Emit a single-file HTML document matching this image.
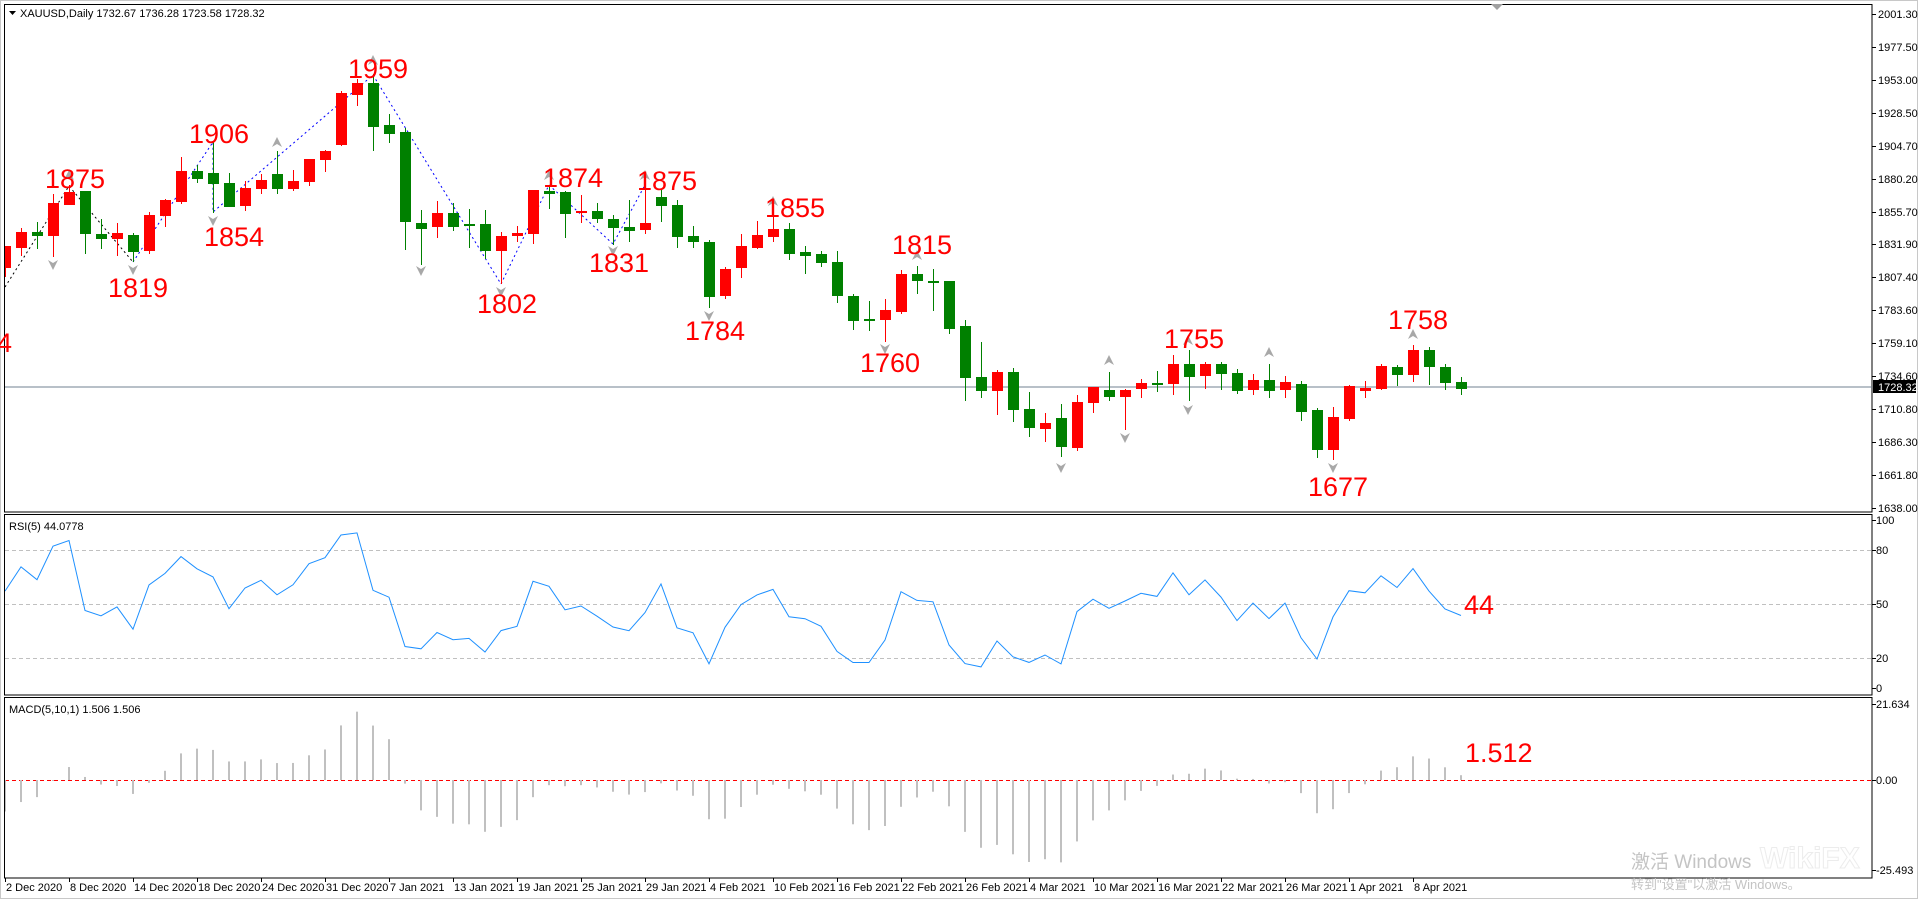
<!DOCTYPE html>
<html><head><meta charset="utf-8">
<style>
html,body{margin:0;padding:0;background:#fff;width:1920px;height:900px;overflow:hidden}
svg{position:absolute;left:0;top:0}
.ax{font-family:"Liberation Sans",sans-serif;font-size:11px;fill:#000}
.lb{font-family:"Liberation Sans",sans-serif;font-size:27px;fill:#ff0000}
</style></head>
<body>
<svg id="s" width="1920" height="900" viewBox="0 0 1920 900" xmlns="http://www.w3.org/2000/svg">
<defs>
<clipPath id="cm"><rect x="5" y="5" width="1867" height="507"/></clipPath>
<clipPath id="cr"><rect x="5" y="515" width="1867" height="180"/></clipPath>
<clipPath id="cd"><rect x="5" y="698" width="1867" height="180"/></clipPath>
</defs>
<!-- outer border -->
<rect x="0.5" y="0.5" width="1917" height="898" fill="none" stroke="#c8c8c8"/>
<!-- frames -->
<rect x="4.5" y="4.5" width="1867.5" height="507.5" fill="none" stroke="#000"/>
<rect x="4.5" y="514.5" width="1867.5" height="180.5" fill="none" stroke="#000"/>
<rect x="4.5" y="697.5" width="1867.5" height="180.5" fill="none" stroke="#000"/>
<!-- top triangle marker -->
<path d="M1491 4 L1503 4 L1497 10 Z" fill="#a0a0a0"/>
<!-- header -->
<path d="M9 11 L16 11 L12.5 15 Z" fill="#000"/>
<text x="20" y="17" class="ax">XAUUSD,Daily  1732.67 1736.28 1723.58 1728.32</text>
<text x="9" y="530" class="ax">RSI(5) 44.0778</text>
<text x="9" y="713" class="ax">MACD(5,10,1) 1.506 1.506</text>

<!-- grid lines -->
<line x1="5" y1="387" x2="1872" y2="387" stroke="#708090" stroke-width="1"/>
<g stroke="#c0c0c0" stroke-dasharray="4,3">
<line x1="5" y1="550.5" x2="1872" y2="550.5"/>
<line x1="5" y1="604.5" x2="1872" y2="604.5"/>
<line x1="5" y1="658.5" x2="1872" y2="658.5"/>
</g>
<line x1="5" y1="780.5" x2="1872" y2="780.5" stroke="#ff0000" stroke-dasharray="4,3"/>

<!-- zigzag -->
<g clip-path="url(#cm)" fill="none" stroke-width="1" stroke-dasharray="2,3">
<polyline points="5,287 69,186 133,262" stroke="#000"/>
<polyline points="133,262 213,142 213,212 373,75 501,284 549,185 613,244 645,185" stroke="#0000ff"/>
</g>

<g id="candles" clip-path="url(#cm)"></g>
<g id="rsi" clip-path="url(#cr)"></g>
<g id="macd" clip-path="url(#cd)"></g>

<!-- fractal arrows -->
<g id="arrows" fill="#a8a8a8"></g>

<!-- labels -->
<g class="lb">
<text x="45" y="188" class="lb">1875</text>
<text x="189" y="143" class="lb">1906</text>
<text x="348" y="78" class="lb">1959</text>
<text x="204" y="246" class="lb">1854</text>
<text x="108" y="297" class="lb">1819</text>
<text x="-3" y="352" class="lb">4</text>
<text x="477" y="313" class="lb">1802</text>
<text x="543" y="187" class="lb">1874</text>
<text x="589" y="272" class="lb">1831</text>
<text x="637" y="190" class="lb">1875</text>
<text x="685" y="340" class="lb">1784</text>
<text x="765" y="217" class="lb">1855</text>
<text x="892" y="254" class="lb">1815</text>
<text x="860" y="372" class="lb">1760</text>
<text x="1164" y="348" class="lb">1755</text>
<text x="1308" y="496" class="lb">1677</text>
<text x="1388" y="329" class="lb">1758</text>
<text x="1464" y="614" class="lb">44</text>
<text x="1465" y="762" class="lb">1.512</text>
</g>

<!-- price axis -->
<g class="ax" id="pax">
<text x="1878" y="18">2001.30</text>
<text x="1878" y="51">1977.50</text>
<text x="1878" y="84">1953.00</text>
<text x="1878" y="117">1928.50</text>
<text x="1878" y="150">1904.70</text>
<text x="1878" y="183">1880.20</text>
<text x="1878" y="216">1855.70</text>
<text x="1878" y="248">1831.90</text>
<text x="1878" y="281">1807.40</text>
<text x="1878" y="314">1783.60</text>
<text x="1878" y="347">1759.10</text>
<text x="1878" y="380">1734.60</text>
<text x="1878" y="413">1710.80</text>
<text x="1878" y="446">1686.30</text>
<text x="1878" y="479">1661.80</text>
<text x="1878" y="512">1638.00</text>
</g>
<rect x="1873" y="380" width="43" height="13" fill="#000"/>
<text x="1878" y="391" class="ax" style="fill:#fff">1728.32</text>
<g class="ax">
<text x="1876" y="524">100</text>
<text x="1876" y="554">80</text>
<text x="1876" y="608">50</text>
<text x="1876" y="662">20</text>
<text x="1876" y="692">0</text>
<text x="1876" y="708">21.634</text>
<text x="1876" y="784">0.00</text>
<text x="1876" y="874">-25.493</text>
</g>
<g id="ticks" stroke="#000"></g>

<!-- date axis -->
<g class="ax">
<text x="6" y="891">2 Dec 2020</text>
<text x="70" y="891">8 Dec 2020</text>
<text x="134" y="891">14 Dec 2020</text>
<text x="198" y="891">18 Dec 2020</text>
<text x="262" y="891">24 Dec 2020</text>
<text x="326" y="891">31 Dec 2020</text>
<text x="390" y="891">7 Jan 2021</text>
<text x="454" y="891">13 Jan 2021</text>
<text x="518" y="891">19 Jan 2021</text>
<text x="582" y="891">25 Jan 2021</text>
<text x="646" y="891">29 Jan 2021</text>
<text x="710" y="891">4 Feb 2021</text>
<text x="774" y="891">10 Feb 2021</text>
<text x="838" y="891">16 Feb 2021</text>
<text x="902" y="891">22 Feb 2021</text>
<text x="966" y="891">26 Feb 2021</text>
<text x="1030" y="891">4 Mar 2021</text>
<text x="1094" y="891">10 Mar 2021</text>
<text x="1158" y="891">16 Mar 2021</text>
<text x="1222" y="891">22 Mar 2021</text>
<text x="1286" y="891">26 Mar 2021</text>
<text x="1350" y="891">1 Apr 2021</text>
<text x="1414" y="891">8 Apr 2021</text>
</g>

<!-- watermark -->
<text x="1631" y="868" style="font-family:'Liberation Sans','Noto Sans CJK SC',sans-serif;font-size:19px;fill:#c4c4c4">激活 Windows</text>
<text x="1631" y="889" style="font-family:'Liberation Sans','Noto Sans CJK SC',sans-serif;font-size:13px;fill:#c4c4c4">转到"设置"以激活 Windows。</text>
<text x="1760" y="868" style="font-family:'Liberation Sans',sans-serif;font-size:30px;font-weight:bold;fill:none;stroke:#ececec;stroke-width:1">WikiFX</text>
</svg>
<script>
(function(){
var NS="http://www.w3.org/2000/svg";
function el(p,t,a){var e=document.createElementNS(NS,t);for(var k in a)e.setAttribute(k,a[k]);p.appendChild(e);return e;}
var D=[
[246,277,246,268,'r'],[228,256,232,248,'r'],[222,249,232,236,'g'],[194,257,203,236,'r'],[185,205,192,205,'r'],
[191,254,191,234,'g'],[219,249,234,239,'g'],[223,256,233,239,'r'],[233,262,235,252,'g'],[212,254,215,251,'r'],
[199,227,200,216,'r'],[157,204,171,202,'r'],[165,183,171,179,'g'],[142,213,173,184,'g'],[173,207,183,207,'g'],
[181,211,188,206,'r'],[174,194,180,189,'r'],[151,194,174,189,'g'],[170,191,181,189,'r'],[159,186,159,182,'r'],
[150,172,151,160,'r'],[91,146,93,145,'r'],[79,106,83,95,'r'],[74,151,83,127,'g'],[114,143,125,134,'g'],
[128,250,132,222,'g'],[210,265,223,229,'g'],[201,238,213,227,'r'],[203,231,213,227,'g'],[209,248,224,226,'g'],
[210,259,224,251,'g'],[232,284,236,251,'r'],[226,242,233,236,'r'],[190,244,190,234,'r'],[185,209,191,194,'g'],
[191,238,192,214,'g'],[195,223,211,213,'r'],[203,223,211,219,'g'],[215,245,219,228,'g'],[200,242,227,231,'g'],
[185,234,223,230,'r'],[190,222,197,206,'g'],[200,248,205,237,'g'],[226,248,236,242,'g'],[240,308,242,297,'g'],
[267,299,269,296,'r'],[234,278,246,268,'r'],[221,249,235,248,'r'],[212,242,229,237,'r'],[223,260,229,254,'g'],
[246,274,252,256,'g'],[251,267,254,263,'g'],[251,303,262,296,'g'],[294,330,296,321,'g'],[301,331,319,321,'g'],
[299,342,310,320,'r'],[270,314,274,312,'r'],[266,294,274,281,'g'],[269,311,281,282,'g'],[281,334,281,329,'g'],
[320,401,326,378,'g'],[342,398,377,391,'g'],[370,415,372,391,'r'],[368,422,372,410,'g'],[392,437,409,428,'g'],
[413,442,423,429,'r'],[404,457,418,447,'g'],[395,451,402,448,'r'],[387,413,387,403,'r'],
[372,401,390,397,'g'],[389,430,390,397,'r'],[379,398,383,389,'r'],[371,392,383,385,'g'],[355,395,364,384,'r'],
[350,401,364,377,'g'],[362,389,364,376,'r'],[362,390,364,374,'g'],[369,394,373,391,'g'],[374,395,380,390,'r'],
[364,398,380,391,'g'],[376,398,382,390,'r'],[381,421,384,412,'g'],[408,458,410,450,'g'],[407,460,417,450,'r'],
[385,421,386,419,'r'],[381,398,388,391,'r'],[364,390,366,389,'r'],[365,386,367,375,'g'],[345,382,350,375,'r'],
[347,385,350,367,'g'],[364,390,367,383,'g'],[377,395,382,389,'g']];
var cg=document.getElementById('candles');
var C=[];
D.forEach(function(d,i){
  var x=5+16*i, col=d[4]=='r'?'#ff0000':'#008000';
  el(cg,'rect',{x:x,y:d[0],width:1,height:Math.max(1,d[1]-d[0]),fill:col});
  var h=Math.max(2,d[3]-d[2]);
  el(cg,'rect',{x:x-5,y:d[2],width:11,height:h,fill:col});
  var cy=d[4]=='r'?d[2]:d[3];
  C.push(2001.3-(cy-14)*0.73543);
});
// RSI(5)
var ag=4,al=3,pts=[];
C.forEach(function(c,i){
  var df=i?c-C[i-1]:0;
  ag=(ag*4+Math.max(df,0))/5; al=(al*4+Math.max(-df,0))/5;
  var r=100*ag/(ag+al);
  pts.push((5+16*i)+','+(694-1.8*r).toFixed(1));
});
el(document.getElementById('rsi'),'polyline',{points:pts.join(' '),fill:'none',stroke:'#1e90ff','stroke-width':1});
// MACD(5,10)
var e5=C[0]+5,e10=C[0]+15,mg=document.getElementById('macd');
C.forEach(function(c,i){
  e5=e5+(c-e5)*2/6; e10=e10+(c-e10)*2/11;
  var m=e5-e10, y=780-m*3.52, x=5+16*i;
  el(mg,'rect',{x:x-1,y:Math.min(y,780),width:2,height:Math.max(1,Math.abs(780-y)),fill:'#c0c0c0'});
});
// ticks
var tg=document.getElementById('ticks');
[14,47,80,113,146,179,212,244,277,310,343,376,409,442,475,508,520,550,604,658,688,704,780,870].forEach(function(y){
  el(tg,'line',{x1:1872,y1:y+0.5,x2:1876,y2:y+0.5});
});
for(var k=0;k<23;k++){var x=5+64*k;el(tg,'line',{x1:x+0.5,y1:878,x2:x+0.5,y2:882});}
// arrows
var ag2=document.getElementById('arrows');
var up=[[69,175],[277,142],[373,60],[549,175],[645,175],[773,201],[917,255],[1109,360],[1188,340],[1269,352],[1413,334]];
var dn=[[53,265],[133,270],[213,221],[421,271],[501,292],[613,251],[709,316],[885,349],[1061,468],[1125,438],[1188,410],[1333,468]];
up.forEach(function(p){el(ag2,'path',{d:'M'+p[0]+' '+(p[1]-5)+' L'+(p[0]+5)+' '+(p[1]+5)+' L'+p[0]+' '+(p[1]+2)+' L'+(p[0]-5)+' '+(p[1]+5)+' Z'});});
dn.forEach(function(p){el(ag2,'path',{d:'M'+p[0]+' '+(p[1]+5)+' L'+(p[0]+5)+' '+(p[1]-5)+' L'+p[0]+' '+(p[1]-2)+' L'+(p[0]-5)+' '+(p[1]-5)+' Z'});});
})();
</script>
</body></html>
